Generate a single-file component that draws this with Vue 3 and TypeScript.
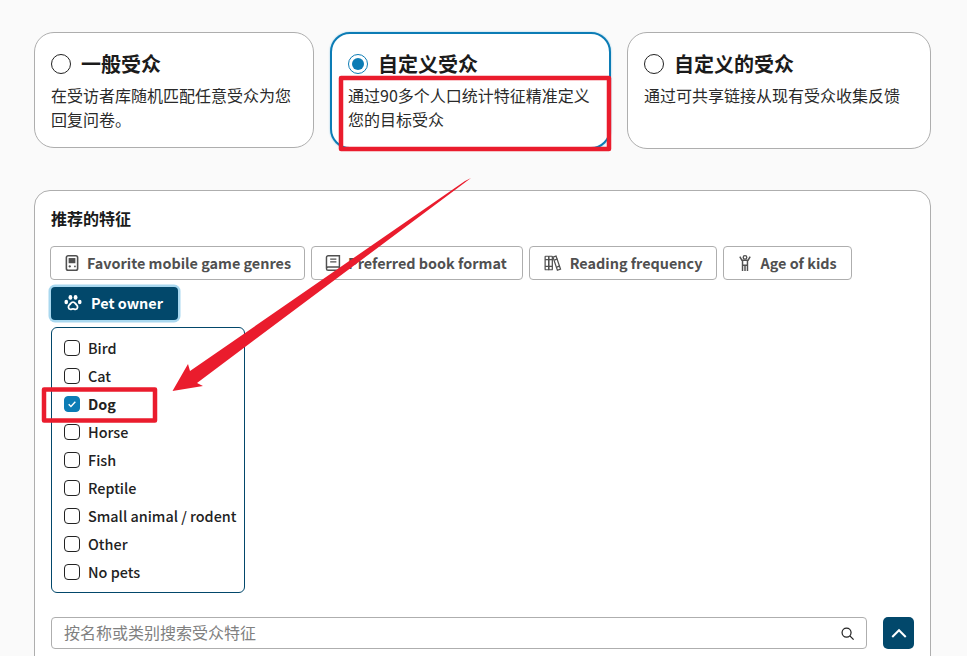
<script setup lang="ts">
const cards = [
  { title: '一般受众', text: '在受访者库随机匹配任意受众为您回复问卷。', on: false },
  { title: '自定义受众', text: '通过90多个人口统计特征精准定义您的目标受众', on: true },
  { title: '自定义的受众', text: '通过可共享链接从现有受众收集反馈', on: false },
]
const options = ['Bird', 'Cat', 'Dog', 'Horse', 'Fish', 'Reptile', 'Small animal / rodent', 'Other', 'No pets']
</script>

<template>
  <div class="page">
    <section class="cards">
      <article v-for="c in cards" :key="c.title" class="card" :class="{ on: c.on }">
        <header class="card-head">
          <span class="radio"><i v-if="c.on"></i></span>
          <h2>{{ c.title }}</h2>
        </header>
        <p>{{ c.text }}</p>
      </article>
    </section>

    <section class="panel">
      <h3>推荐的特征</h3>
      <div class="chips">
        <button class="chip">
          <svg viewBox="0 0 16 16" class="ico"><rect x="3" y="1.500" width="10" height="13" rx="1.600" fill="none" stroke="currentColor" stroke-width="1.400"/><rect x="5" y="3.600" width="6" height="4.600" fill="currentColor"/><path d="M5 11h2M6 10v2" stroke="currentColor" stroke-width="1"/><circle cx="10.600" cy="11" r=".8" fill="currentColor"/></svg>
          Favorite mobile game genres
        </button>
        <button class="chip">
          <svg viewBox="0 0 16 16" class="ico"><path d="M2.200 12.500V3a1.500 1.500 0 0 1 1.500-1.500h10v10H3.700a1.500 1.500 0 0 0 0 3h10v-3" fill="none" stroke="currentColor" stroke-width="1.300"/><path d="M5.500 4.500h5.500M5.500 7h5.500" stroke="currentColor" stroke-width="1.200"/></svg>
          Preferred book format
        </button>
        <button class="chip">
          <svg viewBox="0 0 16 16" class="ico books"><g fill="none" stroke="currentColor" stroke-width="1.100"><rect x="1" y="2" width="3.200" height="12" rx=".5"/><rect x="4.200" y="2" width="3.200" height="12" rx=".5"/><path d="M8 2.800l2.700-.9 4 11.600-2.800 1z"/><path d="M1 5h6.400M1 11h6.400M9.200 5.400l2.800-1M11.400 11.600l2.700-1"/></g></svg>
          Reading frequency
        </button>
        <button class="chip">
          <svg viewBox="0 0 16 16" class="ico"><circle cx="8" cy="3" r="1.600" fill="none" stroke="currentColor" stroke-width="1.200"/><path d="M3.400 2.400l1.800 3.100h5.600l1.800-3.100M5.800 5.500V15M10.200 5.500V15M5.800 10h4.400M8 10v5" fill="none" stroke="currentColor" stroke-width="1.300"/></svg>
          Age of kids
        </button>
        <button class="chip active">
          <svg viewBox="0 0 16 16" class="ico"><g fill="currentColor"><ellipse cx="2" cy="7" rx="1.600" ry="2"/><ellipse cx="14" cy="7" rx="1.600" ry="2"/><ellipse cx="5.700" cy="3" rx="1.700" ry="2.200"/><ellipse cx="10.300" cy="3" rx="1.700" ry="2.200"/></g><path d="M8 7.200c-1.700 0-2.200 1.600-3.200 2.500-1.300 1.200-1.200 3.900 1 3.900.9 0 1.400-.4 2.200-.4s1.300.4 2.200.4c2.200 0 2.300-2.700 1-3.900-1-.9-1.500-2.500-3.200-2.500z" fill="none" stroke="currentColor" stroke-width="1.600"/></svg>
          Pet owner
        </button>
      </div>

      <ul class="menu">
        <li v-for="o in options" :key="o" :class="{ checked: o === 'Dog' }">
          <span class="box">
            <svg v-if="o === 'Dog'" viewBox="0 0 16 16"><path d="M4.200 8.300l2.600 2.500 5-5.300" fill="none" stroke="#fff" stroke-width="1.600"/></svg>
          </span>
          {{ o }}
        </li>
      </ul>

      <div class="search-row">
        <div class="search">
          <span>按名称或类别搜索受众特征</span>
          <svg viewBox="0 0 16 16" class="mag"><circle cx="7" cy="7" r="4.800" fill="none" stroke="#222" stroke-width="1.300"/><path d="M10.500 10.500l4 4" stroke="#222" stroke-width="1.400"/></svg>
        </div>
        <button class="up">
          <svg viewBox="0 0 16 16"><path d="M2 11.500l6-6 6 6" fill="none" stroke="#fff" stroke-width="1.800"/></svg>
        </button>
      </div>
    </section>

    <svg class="notes" viewBox="0 0 967 656" width="967" height="656">
      <g fill="none" stroke="#ea1c2d" stroke-linejoin="round">
        <rect x="341" y="78" width="268" height="71" stroke-width="4.500"/>
        <rect x="44" y="389.500" width="111" height="31" stroke-width="4.500"/>
      </g>
      <polygon fill="#ea1c2d" points="471,178 197,383 203,386 172.500,391 188,364 190,371 465,181"/>
    </svg>
  </div>
</template>

<style>
html, body { margin: 0; background: #fafafa; }
</style>

<style scoped>
.page {
  position: relative;
  width: 967px;
  height: 656px;
  overflow: hidden;
  box-sizing: border-box;
  padding: 32px 36px 0 34px;
  background: #fafafa;
  font-family: "Noto Sans CJK SC", "Noto Sans", sans-serif;
  color: #1b1b1b;
}
.cards {
  display: grid;
  grid-template-columns: 280px 281px 304px;
  column-gap: 16px;
  align-items: start;
}
.card {
  height: 117px;
  box-sizing: border-box;
  padding: 18px 16px 0;
  background: #fff;
  border: 1px solid #aeaeae;
  border-radius: 20px;
}
.card:first-child { height: 116px; }
.card.on {
  border: 2px solid #0c7cb5;
  padding: 17px 16px 0;
  box-shadow: 0 0 2px #8cc7e4;
}
.card-head {
  display: flex;
  align-items: center;
  gap: 10px;
  height: 26px;
}
.card h2 {
  margin: 0;
  font-size: 20px;
  font-weight: 700;
  line-height: 26px;
}
.radio {
  display: flex;
  align-items: center;
  justify-content: center;
  box-sizing: border-box;
  width: 20px;
  height: 20px;
  border: 1.200px solid #222;
  border-radius: 50%;
}
.card.on .radio { border-color: #0c7cb5; }
.radio i {
  width: 12px;
  height: 12px;
  border-radius: 50%;
  background: #0c7cb5;
}
.card p {
  margin: 6px 0 0;
  font-size: 16px;
  line-height: 24px;
  color: #2a2a2a;
}
.panel {
  margin-top: 41px;
  height: 520px;
  box-sizing: border-box;
  padding: 15px 16px 0;
  background: #fff;
  border: 1px solid #aeaeae;
  border-radius: 16px;
}
.panel h3 {
  margin: 0;
  font-size: 16px;
  line-height: 24px;
  font-weight: 700;
}
.chips {
  display: flex;
  flex-wrap: wrap;
  gap: 7px 6px;
  margin-top: 16px;
  margin-left: -1px;
}
.chip {
  display: flex;
  align-items: center;
  gap: 6px;
  height: 34px;
  padding: 0 14px 0 12px;
  box-sizing: border-box;
  background: #fff;
  border: 1px solid #aeaeae;
  border-radius: 4px;
  font: 700 14.400px/20px "Noto Sans CJK SC", "Noto Sans", sans-serif;
  color: #505050;
}
.chip:nth-child(1) { padding-right: 13px; }
.chip:nth-child(2) { padding-right: 15px; }
.chip.active {
  height: 33px;
  margin-left: 1px;
  padding: 0 15px 2px 13px;
  gap: 9px;
  background: #02486b;
  border: 0;
  color: #fff;
  box-shadow: 0 0 0 2.500px #a9d8ef;
}
.ico { width: 18px; height: 18px; flex: none; }
.ico.books { margin: 0 2px; }
.menu {
  list-style: none;
  width: 194px;
  height: 266px;
  box-sizing: border-box;
  margin: 7px 0 0;
  padding: 5px 0 0 12px;
  border: 1px solid #02486b;
  border-radius: 6px;
}
.menu li {
  display: flex;
  align-items: center;
  gap: 8px;
  height: 28px;
  font-size: 14.400px;
  font-weight: 500;
  color: #222;
  white-space: nowrap;
}
.menu li.checked { font-weight: 700; }
.box {
  width: 16px;
  height: 16px;
  box-sizing: border-box;
  margin-top: 2px;
  border: 1.200px solid #222;
  border-radius: 4px;
  flex: none;
}
.checked .box { background: #0c7cb5; border-color: #0c7cb5; }
.box svg { display: block; width: 100%; height: 100%; }
.search-row {
  display: flex;
  gap: 16px;
  margin-top: 24px;
}
.search {
  display: flex;
  align-items: center;
  justify-content: space-between;
  width: 816px;
  height: 32px;
  box-sizing: border-box;
  padding: 0 11px 2px 12px;
  border: 1px solid #aeaeae;
  border-radius: 4px;
  font-size: 16px;
  color: #808080;
}
.mag { width: 15px; height: 15px; margin-top: 2px; }
.up {
  display: flex;
  align-items: center;
  justify-content: center;
  width: 31px;
  height: 32px;
  padding: 0;
  border: 0;
  border-radius: 5px;
  background: #02486b;
}
.up svg { width: 18px; height: 18px; }
.notes {
  position: absolute;
  left: 0;
  top: 0;
  pointer-events: none;
}
</style>
